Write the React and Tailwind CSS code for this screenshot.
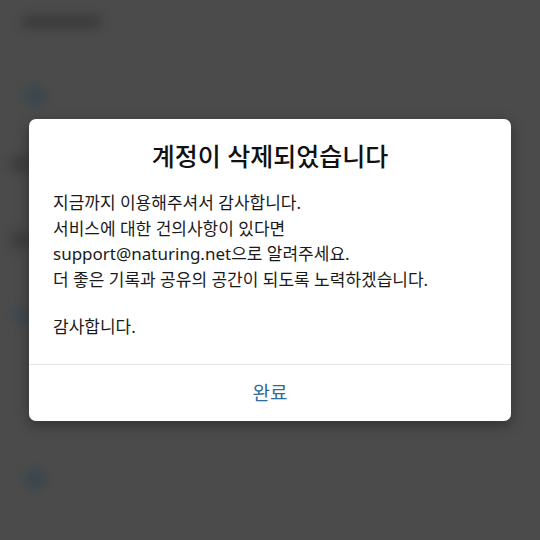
import React from 'react';

const font = { fontFamily: '"Noto Sans", "Noto Sans CJK KR", sans-serif' };

const App = () => {
  return (
    <div className="relative w-[540px] h-[540px] overflow-hidden bg-[#4b4b4b]" style={font}>
      {/* Blurred page behind the dialog */}
      <div className="absolute inset-0 blur-[6px] opacity-60">
        <div className="ml-[22px] mt-[16px] w-[80px] h-[12px] rounded bg-[#2e2e2e]" />
        <div className="ml-[24px] mt-[58px] w-[22px] h-[20px] rounded-full bg-[#2f4250]" />
        <div className="ml-[10px] mt-[50px] w-[22px] h-[16px] bg-[#333]" />
        <div className="ml-[10px] mt-[60px] w-[22px] h-[16px] bg-[#333]" />
        <div className="ml-[14px] mt-[60px] w-[16px] h-[16px] rounded-full bg-[#2f4250]" />
        <div className="ml-[24px] mt-[145px] w-[22px] h-[20px] rounded-full bg-[#2f4250]" />
      </div>

      <div className="absolute inset-0 flex items-center justify-center">
        <div className="w-[482px] bg-white rounded-[7px] shadow-[0_4px_14px_rgba(0,0,0,0.35)]">
          <div className="px-6 pt-[22px] pb-[24px]">
            <h2 className="text-center text-[25px] font-medium text-[#111] leading-[30px]">
              계정이 삭제되었습니다
            </h2>
            <div className="mt-[19px] text-[17px] leading-[25.5px] text-[#1a1a1a]">
              <p>지금까지 이용해주셔서 감사합니다.</p>
              <p>서비스에 대한 건의사항이 있다면</p>
              <p>support@naturing.net으로 알려주세요.</p>
              <p>더 좋은 기록과 공유의 공간이 되도록 노력하겠습니다.</p>
              <p className="mt-[22px]">감사합니다.</p>
            </div>
          </div>
          <div className="border-t border-[#e6e6e6]">
            <button className="w-full h-[56px] text-[19px] text-[#2f6b9a]">완료</button>
          </div>
        </div>
      </div>
    </div>
  );
};

export default App;
